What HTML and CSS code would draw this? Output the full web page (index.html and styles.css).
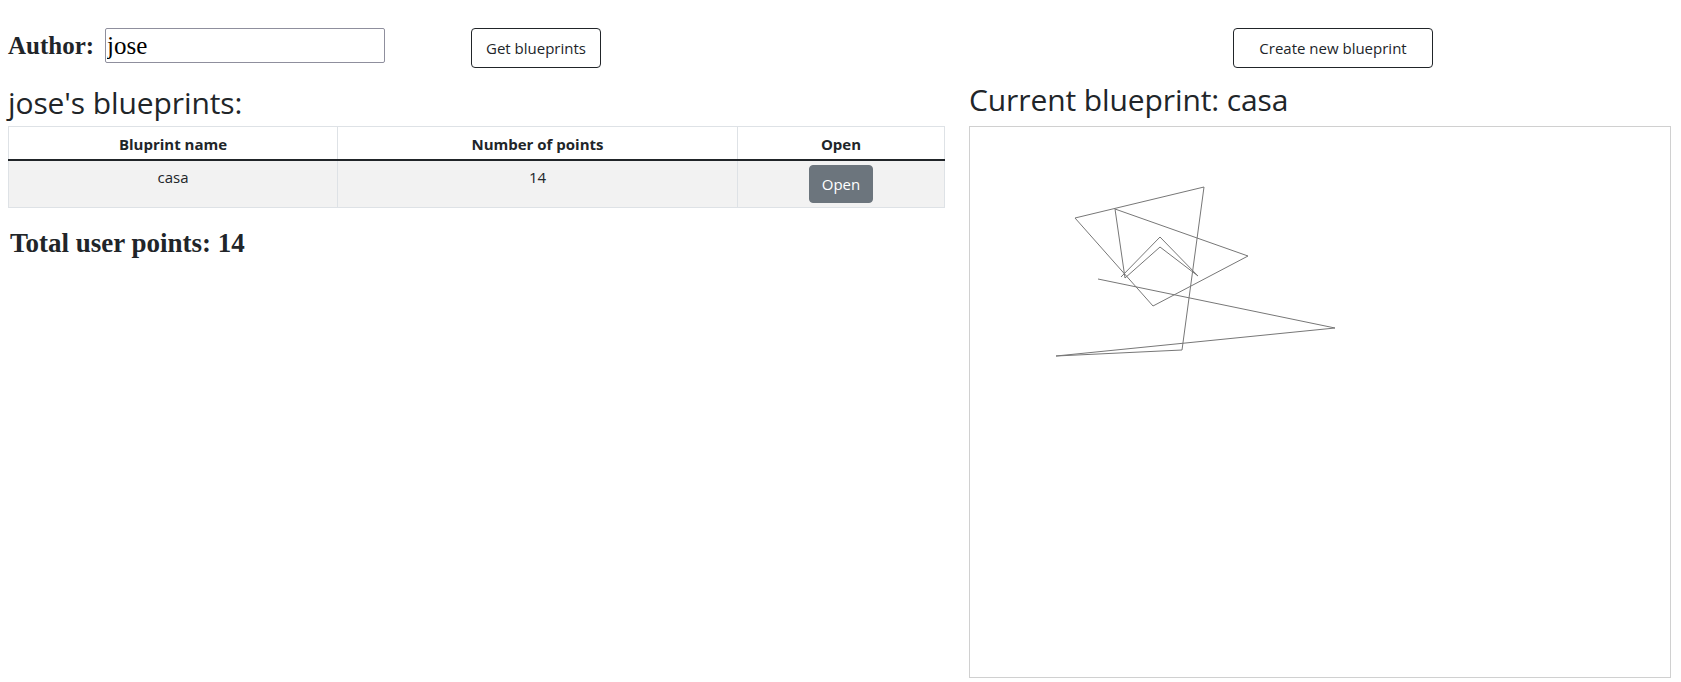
FILE: index.html
```html
<!DOCTYPE html>
<html lang="en">
<head>
<meta charset="utf-8">
<title>Blueprints</title>
<link rel="stylesheet" href="styles.css">
</head>
<body>
<div class="page">
  <div class="col-left">
    <div class="toolbar">
      <div class="author">
        <label class="author-label" for="author">Author:</label>
        <input id="author" class="author-input" type="text" value="jose">
      </div>
      <button class="btn btn-outline btn-get">Get blueprints</button>
    </div>
    <h2 class="title title-left">jose's blueprints:</h2>
    <table class="bp-table">
      <thead>
        <tr>
          <th class="c-name">Bluprint name</th>
          <th class="c-points">Number of points</th>
          <th class="c-open">Open</th>
        </tr>
      </thead>
      <tbody>
        <tr>
          <td>casa</td>
          <td>14</td>
          <td><button class="btn btn-secondary">Open</button></td>
        </tr>
      </tbody>
    </table>
    <h3 class="total">Total user points: 14</h3>
  </div>
  <div class="col-right">
    <div class="toolbar">
      <button class="btn btn-outline btn-create">Create new blueprint</button>
    </div>
    <h2 class="title title-right">Current blueprint: casa</h2>
    <div class="canvas">
      <svg width="700" height="550" viewBox="0 0 700 550" xmlns="http://www.w3.org/2000/svg">
        <polyline class="sketch" fill="none"
          points="128,152 365,201 86,229 212,223 234,60 105,91 183,179 278,129 145,82 155,151 190,120 228,149 190,110 151,150"/>
      </svg>
    </div>
  </div>
</div>
</body>
</html>
```
FILE: styles.css
```css
* { box-sizing: border-box; }
html, body { margin: 0; padding: 0; background: #fff; }
body {
  font-family: "Open Sans", "Noto Sans", sans-serif;
  font-size: 15px;
  color: #212529;
}
.page {
  display: flex;
  gap: 24px;
  padding: 28px 10px 0 8px;
}
.col-left { width: 937px; flex: none; }
.col-right { width: 702px; flex: none; }

.toolbar {
  display: flex;
  align-items: flex-start;
  height: 40px;
}
.author {
  display: flex;
  align-items: baseline;
}
.author-label {
  width: 97px;
  font-family: "Liberation Serif", "Times New Roman", serif;
  font-weight: bold;
  font-size: 25px;
}
.author-input {
  width: 280px;
  height: 35px;
  padding: 2px 1px;
  margin: 0;
  border: 1px solid #8f8f9d;
  border-radius: 2px;
  font-family: "Liberation Serif", "Times New Roman", serif;
  font-size: 25px;
  color: #000;
  background: #fff;
}
.btn {
  font-family: "Open Sans", "Noto Sans", sans-serif;
  font-size: 15px;
  line-height: 24px;
  border-radius: 4px;
  cursor: pointer;
  padding: 0;
}
.btn-outline {
  height: 40px;
  background: #fff;
  color: #212529;
  border: 1px solid #212529;
}
.btn-get { width: 130px; margin-left: 86px; }
.btn-create { width: 200px; margin-left: 264px; }
.btn-secondary {
  width: 64px;
  height: 38px;
  background: #6c757d;
  border: 1px solid #6c757d;
  color: #fff;
}

.title {
  font-size: 30px;
  font-weight: 400;
  line-height: 36px;
  letter-spacing: -0.1px;
}
.title-left { margin: 17px 0 5px; }
.title-right { margin: 14px 0 8px; }

.bp-table {
  width: 937px;
  border-collapse: collapse;
  text-align: center;
}
.bp-table th, .bp-table td {
  border: 1px solid #dee2e6;
  padding: 4px;
  line-height: 24px;
  vertical-align: top;
}
.bp-table th {
  font-weight: 700;
  padding: 5px 4px 3px;
  border-bottom: 2px solid #212529;
}
.bp-table tbody tr { background: #f2f2f2; }
.c-name { width: 329px; }
.c-points { width: 400px; }

.total {
  margin: 19px 0 0 2px;
  font-family: "Liberation Serif", "Times New Roman", serif;
  font-weight: bold;
  font-size: 27px;
  line-height: 32px;
}

.canvas {
  width: 702px;
  height: 552px;
  border: 1px solid #d0d0d0;
  background: #fff;
}
.canvas svg { display: block; }
.sketch {
  stroke: #777;
  stroke-width: 1;
}
```
